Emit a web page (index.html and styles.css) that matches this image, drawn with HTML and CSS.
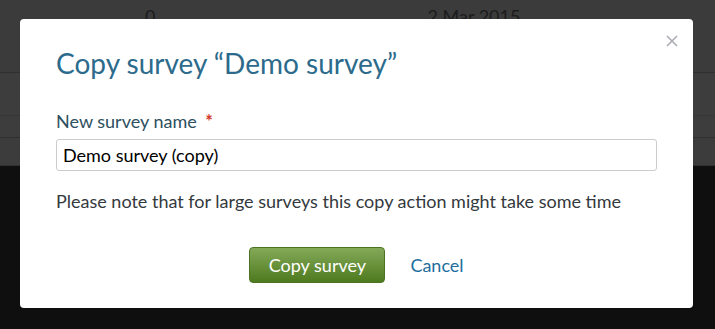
FILE: index.html
```html
<!DOCTYPE html>
<html>
<head>
<meta charset="utf-8">
<link rel="stylesheet" href="styles.css">
</head>
<body>
<div class="page">
  <div class="row row-top">
    <span class="cell cell-count">0</span>
    <span class="cell cell-date">2 Mar 2015</span>
  </div>
  <div class="row row-mid"><div class="subline"></div></div>
  <div class="row row-low"></div>
  <div class="footer"></div>
</div>
<div class="modal">
  <button class="close" aria-label="Close">
    <svg width="12" height="12" viewBox="0 0 12 12"><path d="M1 1 L11 11 M11 1 L1 11" stroke="#a9adb2" stroke-width="1.6" fill="none"/></svg>
  </button>
  <h1 class="title">Copy survey “Demo survey”</h1>
  <label class="label">New survey name <span class="req">*</span></label>
  <input class="field" type="text" value="Demo survey (copy)">
  <p class="note">Please note that for large surveys this copy action might take some time</p>
  <div class="actions">
    <button class="btn">Copy survey</button>
    <a class="cancel" href="#">Cancel</a>
  </div>
</div>
</body>
</html>
```
FILE: styles.css
```css
html, body {
  margin: 0;
  padding: 0;
}
body {
  font-family: Lato, "Open Sans", sans-serif;
  width: 715px;
  height: 329px;
  overflow: hidden;
  position: relative;
}
.page {
  display: flex;
  flex-direction: column;
  height: 329px;
  background: #3b3b3b;
}
.row {
  border-bottom: 1px solid #2f2f2f;
}
.row-top {
  height: 73px;
  display: flex;
  align-items: flex-start;
  color: #1c1c1c;
  font-size: 18px;
  padding-top: 5px;
  box-sizing: border-box;
}
.cell-count {
  margin-left: 145px;
}
.cell-date {
  margin-left: 272px;
}
.row-mid {
  height: 64px;
  background: #3d3d3d;
  position: relative;
}
.subline {
  position: absolute;
  left: 0;
  right: 0;
  top: 42px;
  border-top: 1px solid #363636;
}
.row-low {
  height: 27px;
  background: #3c3c3c;
}
.footer {
  flex: 1;
  background: #0f0f0f;
}
.modal {
  position: absolute;
  left: 20px;
  top: 19px;
  width: 673px;
  height: 289px;
  box-sizing: border-box;
  padding: 27px 36px 0 36px;
  background: #fff;
  border-radius: 4px;
}
.close {
  position: absolute;
  right: 15px;
  top: 16px;
  border: 0;
  background: none;
  padding: 0;
  width: 12px;
  height: 12px;
  display: block;
}
.close svg {
  display: block;
}
.title {
  margin: 0;
  font-size: 28px;
  line-height: 34px;
  font-weight: 400;
  color: #2c6b8c;
}
.label {
  display: block;
  margin-top: 30px;
  font-size: 18px;
  line-height: 22px;
  color: #2e4f60;
}
.req {
  color: #d2382b;
  font-weight: 700;
  margin-left: 4px;
}
.field {
  display: block;
  margin-top: 7px;
  width: 601px;
  height: 32px;
  box-sizing: border-box;
  border: 1px solid #cccccc;
  border-radius: 3px;
  padding: 0 6px;
  font-family: Lato, "Open Sans", sans-serif;
  font-size: 18px;
  color: #000;
  outline: none;
}
.note {
  margin: 19px 0 0 0;
  font-size: 18px;
  line-height: 22px;
  color: #34393d;
}
.actions {
  display: flex;
  justify-content: center;
  align-items: center;
  gap: 25px;
  margin-top: 35px;
}
.btn {
  width: 136px;
  height: 36px;
  box-sizing: border-box;
  border: 1px solid #4c7322;
  border-radius: 4px;
  background: linear-gradient(#84a958, #4e7a1f);
  color: #fff;
  font-family: Lato, "Open Sans", sans-serif;
  font-size: 18px;
  padding: 0;
}
.cancel {
  color: #1d6e9e;
  text-decoration: none;
  font-size: 18px;
}
```
